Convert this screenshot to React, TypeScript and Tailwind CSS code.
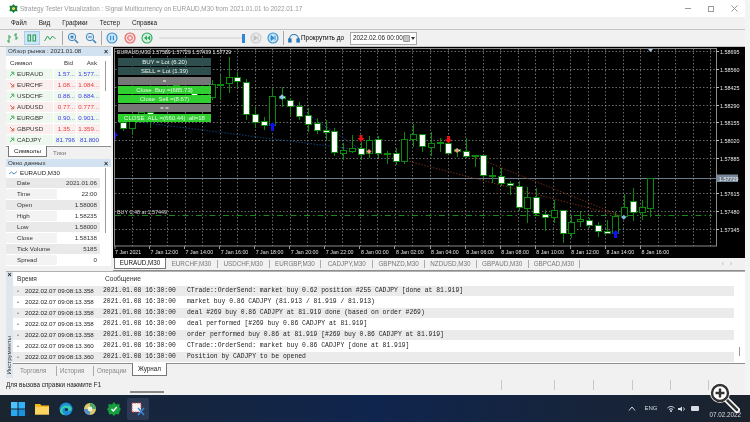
import { Fragment } from "react";

type Candle = [number, number, number, number, number, boolean];

// x, high, low, body top, body bottom, white body
const candles: Candle[] = [
  [123, 118, 131, 122, 128, true], [132, 118, 135, 121, 128, false], [141, 112, 120, 112, 116, false],
  [150, 110, 128, 112, 114, true], [176, 78, 92, 82, 85, true], [194, 88, 100, 92, 95, true],
  [212, 80, 100, 84, 97, false], [220, 75, 100, 84, 85, false], [229, 57, 93, 77, 83, false],
  [237, 72, 88, 77, 81, true], [246, 79, 120, 82, 114, true], [255, 107, 128, 114, 122, true],
  [264, 117, 130, 121, 125, true], [272, 88, 130, 96, 125, false], [282, 87, 107, 96, 98, true],
  [290, 98, 115, 100, 106, true], [299, 102, 120, 106, 116, true], [308, 108, 132, 115, 124, true],
  [317, 118, 134, 123, 130, true], [326, 120, 140, 130, 132, true], [334, 128, 156, 131, 152, true],
  [343, 143, 160, 150, 153, false], [352, 135, 153, 148, 151, false], [361, 142, 160, 148, 154, true],
  [369, 136, 158, 140, 153, false], [378, 136, 158, 139, 153, true], [387, 151, 164, 153, 154, false],
  [396, 148, 165, 153, 161, true], [404, 132, 164, 139, 161, false], [413, 124, 147, 134, 139, false],
  [422, 134, 152, 134, 146, true], [431, 132, 156, 143, 147, false], [440, 138, 152, 142, 143, false],
  [448, 136, 153, 143, 153, true], [457, 148, 157, 149, 151, true], [466, 138, 158, 151, 156, true],
  [475, 155, 167, 155, 156, false], [483, 155, 178, 155, 175, true], [492, 167, 183, 175, 176, true],
  [501, 168, 186, 176, 183, true], [510, 181, 195, 183, 185, true], [519, 181, 211, 186, 207, true],
  [527, 187, 223, 197, 208, false], [536, 188, 215, 197, 213, true], [545, 210, 231, 214, 217, true],
  [554, 200, 223, 210, 217, false], [563, 210, 243, 210, 233, true], [571, 215, 238, 222, 233, false],
  [580, 211, 227, 219, 221, false], [589, 218, 228, 220, 225, true], [598, 222, 237, 225, 231, true],
  [607, 220, 234, 231, 233, true], [615, 212, 236, 216, 233, false], [624, 194, 216, 207, 216, false],
  [633, 188, 221, 201, 212, true], [642, 200, 220, 207, 212, false], [650, 178, 217, 178, 208, false],
];

const prices = [
  ["1.58695", 51], ["1.58560", 69], ["1.58425", 87], ["1.58290", 105], ["1.58155", 122], ["1.58020", 140],
  ["1.57885", 158], ["1.57615", 193], ["1.57480", 211], ["1.57345", 229],
] as const;

const times = [
  "7 Jan 2021", "7 Jan 12:00", "7 Jan 14:00", "7 Jan 16:00", "7 Jan 18:00", "7 Jan 20:00", "7 Jan 22:00", "8 Jan 00:00",
  "8 Jan 02:00", "8 Jan 04:00", "8 Jan 06:00", "8 Jan 08:00", "8 Jan 10:00", "8 Jan 12:00", "8 Jan 14:00", "8 Jan 16:00",
];

const symbols = [
  ["EURAUD", "1.57...", "1.577...", true], ["EURCHF", "1.08...", "1.084...", false], ["USDCHF", "0.88...", "0.884...", true],
  ["AUDUSD", "0.77...", "0.777...", false], ["EURGBP", "0.90...", "0.901...", true], ["GBPUSD", "1.35...", "1.359...", false],
  ["CADJPY", "81.796", "81.800", true],
] as const;

const dataRows = [
  ["Date", "2021.01.06"], ["Time", "22:00"], ["Open", "1.58008"], ["High", "1.58235"],
  ["Low", "1.58000"], ["Close", "1.58138"], ["Tick Volume", "5185"], ["Spread", "0"],
];

const chartTabs = ["EURCHF,M30", "USDCHF,M30", "EURGBP,M30", "CADJPY,M30", "GBPNZD,M30", "NZDUSD,M30", "GBPAUD,M30", "GBPCAD,M30"];

const logs = [
  ["2022.02.07 09:08:13.358", "CTrade::OrderSend: market buy 0.62 position #255 CADJPY [done at 81.919]"],
  ["2022.02.07 09:08:13.358", "market buy 0.86 CADJPY (81.913 / 81.919 / 81.913)"],
  ["2022.02.07 09:08:13.358", "deal #269 buy 0.86 CADJPY at 81.919 done (based on order #269)"],
  ["2022.02.07 09:08:13.358", "deal performed [#269 buy 0.86 CADJPY at 81.919]"],
  ["2022.02.07 09:08:13.358", "order performed buy 0.86 at 81.919 [#269 buy 0.86 CADJPY at 81.919]"],
  ["2022.02.07 09:08:13.360", "CTrade::OrderSend: market buy 0.86 CADJPY [done at 81.919]"],
  ["2022.02.07 09:08:13.360", "Position by CADJPY to be opened"],
];

const chartButtons = [
  ["BUY = Lot (6.20)", "bg-[#2f4f4f]"], ["SELL = Lot (1.39)", "bg-[#2f4f4f]"], ["=", "bg-[#777777]"],
  ["Close  Buy =(685.73)", "bg-[#2fcf2f]"], ["Close  Sell =(8.67)", "bg-[#2fcf2f]"], ["= =", "bg-[#777777]"],
  ["CLOSE  ALL =(660.44) :all=18", "bg-[#2fcf2f]"],
];

const Arrow = ({ up }: { up: boolean }) => (
  <svg width="6" height="6" viewBox="0 0 6 6" className="shrink-0">
    {up ? (
      <path d="M1 5 L4.5 1.5 M2 1.2 H4.8 V4" stroke="#45b060" strokeWidth="1" fill="none" />
    ) : (
      <path d="M1 1 L4.5 4.5 M2 4.8 H4.8 V2" stroke="#d8694a" strokeWidth="1" fill="none" />
    )}
  </svg>
);

const RoundBtn = ({ color, fill, children }: { color: string; fill: string; children: React.ReactNode }) => (
  <svg width="12" height="12" viewBox="0 0 12 12">
    <circle cx="6" cy="6" r="5" fill={fill} stroke={color} strokeWidth="1.1" />
    {children}
  </svg>
);

const Zoom = ({ plus }: { plus: boolean }) => (
  <svg width="12" height="12" viewBox="0 0 12 12" fill="none">
    <circle cx="5" cy="5" r="3.7" fill="#dcecf8" stroke="#3f86b8" strokeWidth="1" />
    <path d="M3.2 5 H6.8" stroke="#2a6a9c" />
    {plus && <path d="M5 3.2 V6.8" stroke="#2a6a9c" />}
    <path d="M8 8 L11 11" stroke="#3f86b8" strokeWidth="1.6" />
  </svg>
);

const Sep = () => <div className="w-px h-[14px] bg-[#a8a8a8] mx-[4px]" />;

const Toolbar = () => (
  <div className="h-[18px] flex items-center pl-[6px] bg-[#f1f1f1] border-y border-[#c4c4c4]">
    <svg width="14" height="12" viewBox="0 0 14 12" className="mr-[2px]" fill="none" stroke="#2aa050">
      <path d="M3 3 V11 M1 9 H3 M3 5 H5 M10 1 V8 M8 3 H10 M10 6 H12" />
    </svg>
    <div className="w-[16px] h-[14px] bg-[#cfe6f8] border border-[#a8d0ee] flex items-center justify-center mx-[2px]">
      <svg width="10" height="10" viewBox="0 0 10 10" fill="none" stroke="#1f9a4a">
        <rect x="1" y="2" width="2.6" height="6" />
        <rect x="6" y="2" width="2.6" height="6" />
      </svg>
    </div>
    <svg width="12" height="10" viewBox="0 0 12 10" className="mx-[2px]" fill="none" stroke="#2aa050">
      <path d="M0.5 8 L3.5 3 L6 6.5 L8.5 3 L11.5 6" />
    </svg>
    <Sep />
    <Zoom plus />
    <div className="w-[6px]" />
    <Zoom plus={false} />
    <Sep />
    <RoundBtn color="#2f8fd0" fill="#cfe6f8"><path d="M4.6 3.8 V8.2 M7.4 3.8 V8.2" stroke="#2f8fd0" strokeWidth="1.2" /></RoundBtn>
    <div className="w-[6px]" />
    <RoundBtn color="#e85a5a" fill="#fbdcdc"><circle cx="6" cy="6" r="2.3" fill="none" stroke="#e85a5a" /></RoundBtn>
    <div className="w-[5px]" />
    <RoundBtn color="#2fa860" fill="#d6f2df"><path d="M6 3.6 L3 6 L6 8.4 Z M9.2 3.6 L6.2 6 L9.2 8.4 Z" fill="#2fa860" /></RoundBtn>
    <div className="w-[84px] h-[2px] bg-[#e0e0e0] ml-[6px] mr-[-1px]" />
    <div className="w-[3px] h-[9px] bg-[#2f86d8]" />
    <div className="w-[5px]" />
    <RoundBtn color="#c8c8c8" fill="#ececec"><path d="M4 3.6 L7 6 L4 8.4 Z M8 3.6 V8.4" fill="#c0c0c0" stroke="#c0c0c0" /></RoundBtn>
    <div className="w-[5px]" />
    <RoundBtn color="#2f8fd0" fill="#cfe6f8"><path d="M4 3.6 L7 6 L4 8.4 Z M8 3.6 V8.4" fill="#2f8fd0" stroke="#2f8fd0" /></RoundBtn>
    <Sep />
    <svg width="12" height="12" viewBox="0 0 12 12" fill="none" stroke="#2a78b8" strokeWidth="1.2" className="mr-[1px]">
      <path d="M1.5 7 A4.5 4.5 0 0 1 10.5 7" />
      <rect x="0.8" y="7" width="2.2" height="3" fill="#2a78b8" />
      <rect x="9" y="7" width="2.2" height="3" fill="#2a78b8" />
    </svg>
    <span className="text-[6.4px] text-black whitespace-nowrap w-[49px]">Прокрутить до</span>
    <div className="w-[67px] h-[13px] bg-white border border-[#a8a8a8] flex items-center pl-[2px] text-[6.4px] text-[#222] whitespace-nowrap">
      <span className="flex-1">2022.02.06 00:00</span>
      <div className="w-[7px] h-[7px] bg-[#c4c4c4] border border-[#999] rounded-[1px]" />
      <svg width="4" height="3" viewBox="0 0 4 3" className="mx-[1px]"><path d="M0 0 H4 L2 3 Z" fill="#333" /></svg>
    </div>
  </div>
);

const Chart = () => (
  <div className="relative h-[211px] bg-black overflow-hidden">
    {/* chart coordinates are page coordinates, so the viewBox starts at 113,47 */}
    <svg width="632" height="211" viewBox="113 47 632 211" className="block" fontFamily="'Liberation Sans', sans-serif">
      <rect x="114.5" y="48.5" width="602" height="197.5" fill="none" stroke="#8a8a8a" />
      {Array.from({ length: 34 }, (_, i) => (
        <path key={i} d={`M${132.5 + Math.round(i * 17.53)} 49 V246`} stroke="#9a9a9a" strokeWidth="0.7" strokeDasharray="1.5 2" />
      ))}
      {prices.map(([p, y]) => (
        <Fragment key={p}>
          <path d={`M115 ${y + 0.5} H716`} stroke="#9a9a9a" strokeWidth="0.7" strokeDasharray="1.5 2" />
          <path d={`M716 ${y + 0.5} H719`} stroke="#bbb" />
          <text x="720" y={y + 2.5} fontSize="5.4" fill="#e8e8e8">{p}</text>
        </Fragment>
      ))}
      <path d="M115 215.5 H712" stroke="#1a8a1a" strokeDasharray="6 3 1.5 3" />
      <path d="M115 178.5 H717" stroke="#6d7b8a" />
      <text x="117" y="214" fontSize="5.4" fill="#d8d8d8">BUY 0.48 at 1.57449</text>
      <path d="M123 120 L361 150 M282 97 L361 150" stroke="#123f78" strokeDasharray="1.5 1.5" />
      <path d="M369 151 L624 217 M457 150 L624 217" stroke="#6e2a18" strokeDasharray="1.5 1.5" />
      {candles.map(([x, hi, lo, top, bottom, white]) => (
        <Fragment key={x}>
          <path d={`M${x + 0.5} ${hi} V${lo}`} stroke="#0a8a0a" />
          <rect x={x - 3 + 0.5} y={top + 0.5} width="6" height={Math.max(bottom - top, 1)} fill={white ? "#ffffff" : "#000000"} stroke="#0a8a0a" />
        </Fragment>
      ))}
      {/* deal arrows and markers */}
      <path d="M272.5 122 L276 126 H274 V131 H271 V126 H269 Z" fill="#1010f0" />
      <path d="M615.5 230 L619 234 H617 V238 H614 V234 H612 Z" fill="#1010f0" />
      <path d="M115 131 L118 136 H116 V139 H115 Z" fill="#1010f0" />
      <path d="M361 142 L357.5 138 H359.5 V135 H362.5 V138 H364.5 Z" fill="#f01010" />
      <path d="M448.5 143.5 L445 139.5 H447 V136 H450 V139.5 H452 Z" fill="#f01010" />
      <rect x="280" y="95" width="4" height="4" transform="rotate(45 282 97)" fill="#8fc4ee" />
      <rect x="367.5" y="149.5" width="3.6" height="3.6" transform="rotate(45 369 151)" fill="#f09080" />
      <rect x="455.5" y="148.5" width="3.6" height="3.6" transform="rotate(45 457 150)" fill="#f09080" />
      <rect x="622.2" y="215.5" width="3.6" height="3.6" transform="rotate(45 624 217)" fill="#7fb8e8" />
      <rect x="123" y="118" width="2.5" height="2.5" transform="rotate(45 124 119)" fill="#6fa8e0" />
      <path d="M648 49 H653 L650.5 52 Z" fill="#a8c8e8" />
      <rect x="717" y="174.5" width="21" height="7.5" fill="#76889a" />
      <text x="719" y="180.5" fontSize="5.4" fill="#f0f0f0">1.57729</text>
      {times.map((t, i) => (
        <Fragment key={t}>
          <path d={`M${i === 0 ? 115 : 149.5 + Math.round((i - 1) * 35.07)} 246 V249`} stroke="#999" />
          <text x={i === 0 ? 115 : 150.5 + (i - 1) * 35.07} y="253.5" fontSize="5.3" fill="#e0e0e0">{t}</text>
        </Fragment>
      ))}
      <text x="117" y="54" fontSize="5.2" fill="#e8e8e8">EURAUD,M30  1.57589 1.57729 1.57439 1.57729</text>
    </svg>
    <div className="absolute left-[5px] top-[11px] w-[93px] flex flex-col gap-[1.3px]">
      {chartButtons.map(([label, bg]) => (
        <div key={label} className={`h-[8px] flex items-center justify-center text-[6px] leading-none text-[#e8f4e8] whitespace-pre ${bg}`}>
          {label}
        </div>
      ))}
    </div>
  </div>
);

const ChartTabs = () => (
  <div className="h-[13px] flex items-start bg-[#f1f1f1] border-b border-[#8e8e8e] text-[6.3px] text-[#777] whitespace-nowrap">
    <div className="w-[52px] h-[11px] ml-[1px] flex items-center justify-center bg-white border border-t-0 border-[#777] text-[#111]">EURAUD,M30</div>
    <div className="flex pt-[1.5px]">
      {chartTabs.map((t) => (
        <div key={t} className="w-[51.8px] h-[8px] flex items-center justify-center border-r border-[#aaa]">{t}</div>
      ))}
    </div>
    <div className="flex-1 flex justify-end gap-[6px] pr-[13px] pt-[1px] text-[#aaa]">
      <span>‹</span>
      <span>›</span>
    </div>
  </div>
);

const PanelHeader = ({ title }: { title: string }) => (
  <div className="h-[9px] flex items-center justify-between pl-[2px] pr-[3px] bg-[#d3e2f0] text-[6.2px] leading-none text-[#333] whitespace-nowrap">
    <span>{title}</span>
    <span className="text-[7px] font-bold text-[#222]">×</span>
  </div>
);

const MarketWatch = () => (
  <div className="h-[110px] flex flex-col">
    <PanelHeader title="Обзор рынка : 2021.01.08" />
    <div className="flex-1 flex bg-white">
      <div className="w-[94px] text-[6.2px] whitespace-nowrap">
        <div className="h-[13px] flex items-center text-[#333]">
          <span className="w-[47px] pl-[4px]">Символ</span>
          <span className="w-[23px] text-right pr-[3px]">Bid</span>
          <span className="w-[24px] text-right pr-[3px]">Ask</span>
        </div>
        {symbols.map(([name, bid, ask, up]) => (
          <div key={name} className={`h-[11px] flex items-center border-b border-white ${up ? "bg-[#eef8ee]" : "bg-[#fbeeee]"}`}>
            <span className="w-[47px] flex items-center gap-[2px] pl-[3px] text-[#333]"><Arrow up={up} />{name}</span>
            <span className={`w-[23px] text-right pr-[1px] border-l border-white ${up ? "text-[#3a3ae8]" : "text-[#e83a3a]"}`}>{bid}</span>
            <span className={`w-[24px] text-right pr-[1px] border-l border-white ${up ? "text-[#3a3ae8]" : "text-[#e83a3a]"}`}>{ask}</span>
          </div>
        ))}
      </div>
      <div className="flex-1 flex justify-center pt-[5px]">
        <div className="w-[1.5px] h-[30px] bg-[#9a9a9a]" />
      </div>
    </div>
    <div className="h-[11px] flex items-start text-[6.2px] whitespace-nowrap bg-[#f1f1f1] border-t border-[#8e8e8e]">
      <div className="w-[39px] h-[11px] ml-[2px] -mt-px flex items-center justify-center bg-white border border-t-0 border-[#777] text-[#222]">Символы</div>
      <div className="pl-[6px] pt-[1px] text-[#777]">Тики</div>
    </div>
  </div>
);

const DataWindow = () => (
  <div className="h-[107px] mt-[2px] flex flex-col">
    <PanelHeader title="Окно данных" />
    <div className="flex-1 flex bg-white text-[6.2px] whitespace-nowrap">
      <div className="w-[94px]">
        <div className="h-[11px] flex items-center gap-[3px] pl-[3px] text-[#222]">
          <svg width="8" height="6" viewBox="0 0 8 6" fill="none" stroke="#5a8ab8"><path d="M0 4 L2.5 2 L5 4 L8 1.5" /></svg>
          EURAUD,M30
        </div>
        {dataRows.map(([k, v], i) => (
          <div key={k} className={`h-[11px] flex items-center text-[#333] border-b border-white ${i % 2 === 0 ? "bg-[#e9e9e9]" : "bg-white"}`}>
            <span className={`w-[51px] h-full flex items-center pl-[11px] ${i % 2 === 0 ? "" : "bg-[#f3f3f3]"}`}>{k}</span>
            <span className="flex-1 text-right pr-[3px]">{v}</span>
          </div>
        ))}
      </div>
      <div className="flex-1 flex justify-center pt-[1px]">
        <div className="w-[1.5px] h-[65px] bg-[#9a9a9a]" />
      </div>
    </div>
  </div>
);

const Terminal = () => (
  <div className="h-[107px] flex border-t border-[#b0b0b0] bg-[#f1f1f1]">
    <div className="w-[7px] flex flex-col items-center bg-[#dfe6ee]">
      <span className="text-[7px] leading-none font-bold text-[#222] mt-[-1px]">×</span>
      <div className="flex-1" />
      <span className="text-[6.2px] leading-none text-[#333] [writing-mode:vertical-rl] rotate-180 mb-[3px]">Инструменты</span>
    </div>
    <div className="w-[732px] flex flex-col">
      <div className="h-[91px] flex bg-white">
        <div className="w-[721px]">
          <div className="h-[14px] flex items-center text-[6.6px] text-[#333]">
            <span className="w-[88px] pl-[4px]">Время</span>
            <span className="pl-[4px]">Сообщение</span>
          </div>
          {logs.map(([stamp, msg], i) => (
            <div key={i} className={`h-[11px] flex items-center whitespace-pre border-b border-white text-[#222] ${i % 2 === 0 ? "bg-[#ebebeb]" : "bg-white"}`}>
              <span className="w-[5px] ml-[4px] text-[6px] text-[#888]">•</span>
              <span className="w-[78px] ml-[3px] text-[6.2px]">{stamp}</span>
              <span className="font-['Liberation_Mono',monospace] text-[6.4px] w-[84px]">2021.01.08 16:30:00</span>
              <span className="font-['Liberation_Mono',monospace] text-[6.4px]">{msg}</span>
            </div>
          ))}
        </div>
        <div className="flex-1 flex justify-center items-end pb-[7px]">
          <div className="w-[1.5px] h-[9px] bg-[#999]" />
        </div>
      </div>
      <div className="h-[15px] flex items-start border-t border-[#8e8e8e] text-[6.3px] text-[#888]">
        <div className="flex items-center h-[10px] pl-[7px] mt-[2px]">
          <span className="w-[36px]">Торговля</span>
          <span className="w-[37px] border-l border-[#aaa] pl-[3px]">История</span>
          <span className="w-[36px] border-l border-[#aaa] pl-[3px]">Операции</span>
        </div>
        <div className="w-[35px] h-[13px] ml-[3px] -mt-px flex items-center justify-center bg-white border border-t-0 border-[#777] text-[#222]">Журнал</div>
      </div>
    </div>
  </div>
);

const StatusBar = () => (
  <div className="h-[13px] flex items-center pl-[6px] pt-[1px] bg-[#f1f1f1] text-[6.3px] text-[#222] whitespace-nowrap">
    <span className="w-[495px]">Для вызова справки нажмите F1</span>
    {[53, 39, 39, 38, 38, 37].map((w, i) => (
      <div key={i} className="h-[10px] border-l border-[#c8c8c8]" style={{ width: w }} />
    ))}
  </div>
);

const Taskbar = () => (
  <div className="h-[27px] flex items-center bg-gradient-to-r from-[#1b2530] via-[#10254e] to-[#1b222c] relative">
    <div className="flex items-center pl-[11px] gap-[10px]">
      <svg width="14" height="14" viewBox="0 0 14 14">
        <rect width="6.5" height="6.5" fill="#4cc2ff" /><rect x="7.5" width="6.5" height="6.5" fill="#2fb2f8" />
        <rect y="7.5" width="6.5" height="6.5" fill="#2aa8f0" /><rect x="7.5" y="7.5" width="6.5" height="6.5" fill="#1a90e0" />
      </svg>
      <svg width="14" height="12" viewBox="0 0 14 12">
        <path d="M0 1 H5 L6.5 2.5 H14 V11.5 H0 Z" fill="#f5b81f" /><rect y="4" width="14" height="7.5" fill="#fcd462" />
      </svg>
      <svg width="14" height="14" viewBox="0 0 14 14">
        <circle cx="7" cy="7" r="6.5" fill="#1c8fd8" />
        <path d="M1 9 C2 3 10 2 12.5 6 C13.5 9 9.5 9.5 8 8.5 C9 7 7 5 5 6 C3 7 3 11 6 13 C3 13 1 11 1 9 Z" fill="#37d0a8" />
        <circle cx="7.5" cy="7.5" r="1.6" fill="#0b2a50" />
      </svg>
      <svg width="14" height="14" viewBox="0 0 14 14">
        <circle cx="7" cy="7" r="6" fill="#d8c86a" /><path d="M7 1 A6 6 0 0 1 13 7 H7 Z" fill="#4aa868" />
        <path d="M1 7 A6 6 0 0 0 7 13 V7 Z" fill="#5a90c8" /><circle cx="7" cy="7" r="2.4" fill="#f4f0d8" />
      </svg>
      <svg width="14" height="14" viewBox="0 0 14 14">
        <path d="M7 0 L9 2.5 L12.5 2 L12.5 5.5 L14 7 L12.5 9.5 L12 12.5 L9 12 L7 14 L5 12 L2 12.5 L1.5 9.5 L0 7 L1.5 5.5 L1.5 2 L5 2.5 Z" fill="#14a03c" />
        <path d="M4.5 7 L6.3 9 L9.8 5" stroke="#fff" strokeWidth="1.4" fill="none" />
      </svg>
      <div className="w-[22px] h-[22px] -mx-[4px] rounded-[2px] bg-[#2a3a55] flex items-center justify-center">
        <svg width="14" height="14" viewBox="0 0 14 14">
          <rect x="1" y="1" width="9" height="9" fill="#f4f4f4" stroke="#d84040" strokeDasharray="1.5 1" />
          <path d="M7 13 L13 6 M7 6 L13 13" stroke="#3a8ad8" strokeWidth="1.4" />
        </svg>
      </div>
    </div>
    <div className="ml-auto flex items-center pr-[9px] text-[6px] text-[#d8dce2] whitespace-nowrap">
      <svg width="8" height="5" viewBox="0 0 8 5" fill="none" stroke="#d8dce2"><path d="M1 4.5 L4 1 L7 4.5" /></svg>
      <span className="ml-[8px] w-[23px]">ENG</span>
      <svg width="8" height="6" viewBox="0 0 8 6" fill="none" stroke="#d8dce2"><path d="M0.5 2 C3 0 5 0 7.5 2 M2 3.5 C3.5 2.5 4.5 2.5 6 3.5" /><circle cx="4" cy="5" r="0.6" fill="#d8dce2" /></svg>
      <svg width="8" height="6" viewBox="0 0 8 6" className="ml-[3px]" fill="#d8dce2"><path d="M0 2 H2 L4 0.5 V5.5 L2 4 H0 Z" /><path d="M5.5 1.5 C6.5 2.5 6.5 3.5 5.5 4.5" fill="none" stroke="#d8dce2" /></svg>
      <svg width="9" height="5" viewBox="0 0 9 5" className="ml-[5px] mr-[9px]"><rect width="8" height="5" rx="1" fill="#d8dce2" /></svg>
      <span className="mt-[12px] text-[6.3px]">07.02.2022</span>
    </div>
  </div>
);

export default function App() {
  return (
    <div className="relative w-[750px] h-[422px] overflow-hidden bg-[#f4f4f4] font-['Liberation_Sans',sans-serif] blur-[0.3px]">
      <div className="w-[745px] h-[395px] bg-[#f1f1f1] rounded-tr-[3px] flex flex-col">
        <div className="h-[17px] bg-white flex items-center pl-[9px] rounded-tr-[3px]">
          <svg width="9" height="9" viewBox="0 0 9 9" className="mr-[2px]">
            <path d="M4.5 0 L6 1.7 L8.5 1.7 L8 4.5 L8.5 7.3 L6 7.3 L4.5 9 L3 7.3 L0.5 7.3 L1 4.5 L0.5 1.7 L3 1.7 Z" fill="#15803d" />
            <circle cx="4.5" cy="4.5" r="1.6" fill="#f0d850" />
          </svg>
          <span className="text-[6.35px] text-[#999] whitespace-nowrap">Strategy Tester Visualization : Signal Multicurrency on EURAUD,M30 from 2021.01.01 to 2022.01.17</span>
          <div className="ml-auto flex items-center gap-[17px] pr-[7px] text-[#888]">
            <div className="w-[6px] h-px bg-[#999]" />
            <div className="w-[6px] h-[6px] border border-[#999]" />
            <svg width="7" height="7" viewBox="0 0 7 7" stroke="#999"><path d="M0.5 0.5 L6.5 6.5 M6.5 0.5 L0.5 6.5" /></svg>
          </div>
        </div>
        <div className="h-[12px] flex items-center pl-[11px] gap-[12px] bg-[#f1f1f1] text-[6.4px] text-[#222] whitespace-nowrap">
          <span>Файл</span>
          <span>Вид</span>
          <span>Графики</span>
          <span>Тестер</span>
          <span>Справка</span>
        </div>
        <Toolbar />
        <div className="h-[224px] flex pl-[6px]">
          <div className="w-[107px] pr-[2px] flex flex-col">
            <MarketWatch />
            <DataWindow />
          </div>
          <div className="w-[632px] flex flex-col">
            <Chart />
            <ChartTabs />
          </div>
        </div>
        <div className="pl-[6px]">
          <Terminal />
        </div>
        <StatusBar />
      </div>
      <Taskbar />
      {/* image viewer zoom cursor sitting over the screenshot */}
      <svg width="32" height="32" viewBox="0 0 32 32" className="absolute left-[708px] top-[381px]" fill="none">
        <path d="M19 19 L29 29" stroke="#fff" strokeWidth="6" strokeLinecap="round" />
        <path d="M19 19 L29 29" stroke="#333" strokeWidth="2.5" strokeLinecap="round" />
        <circle cx="12" cy="12" r="10" fill="#fff" />
        <circle cx="12" cy="12" r="8" fill="#ffffff" stroke="#333" strokeWidth="2.4" />
        <path d="M7.5 12 H16.5 M12 7.5 V16.5" stroke="#333" strokeWidth="2.4" />
      </svg>
      <div className="absolute left-[130px] top-[391px] w-[34px] h-[2px] bg-[#888]" />
    </div>
  );
}
